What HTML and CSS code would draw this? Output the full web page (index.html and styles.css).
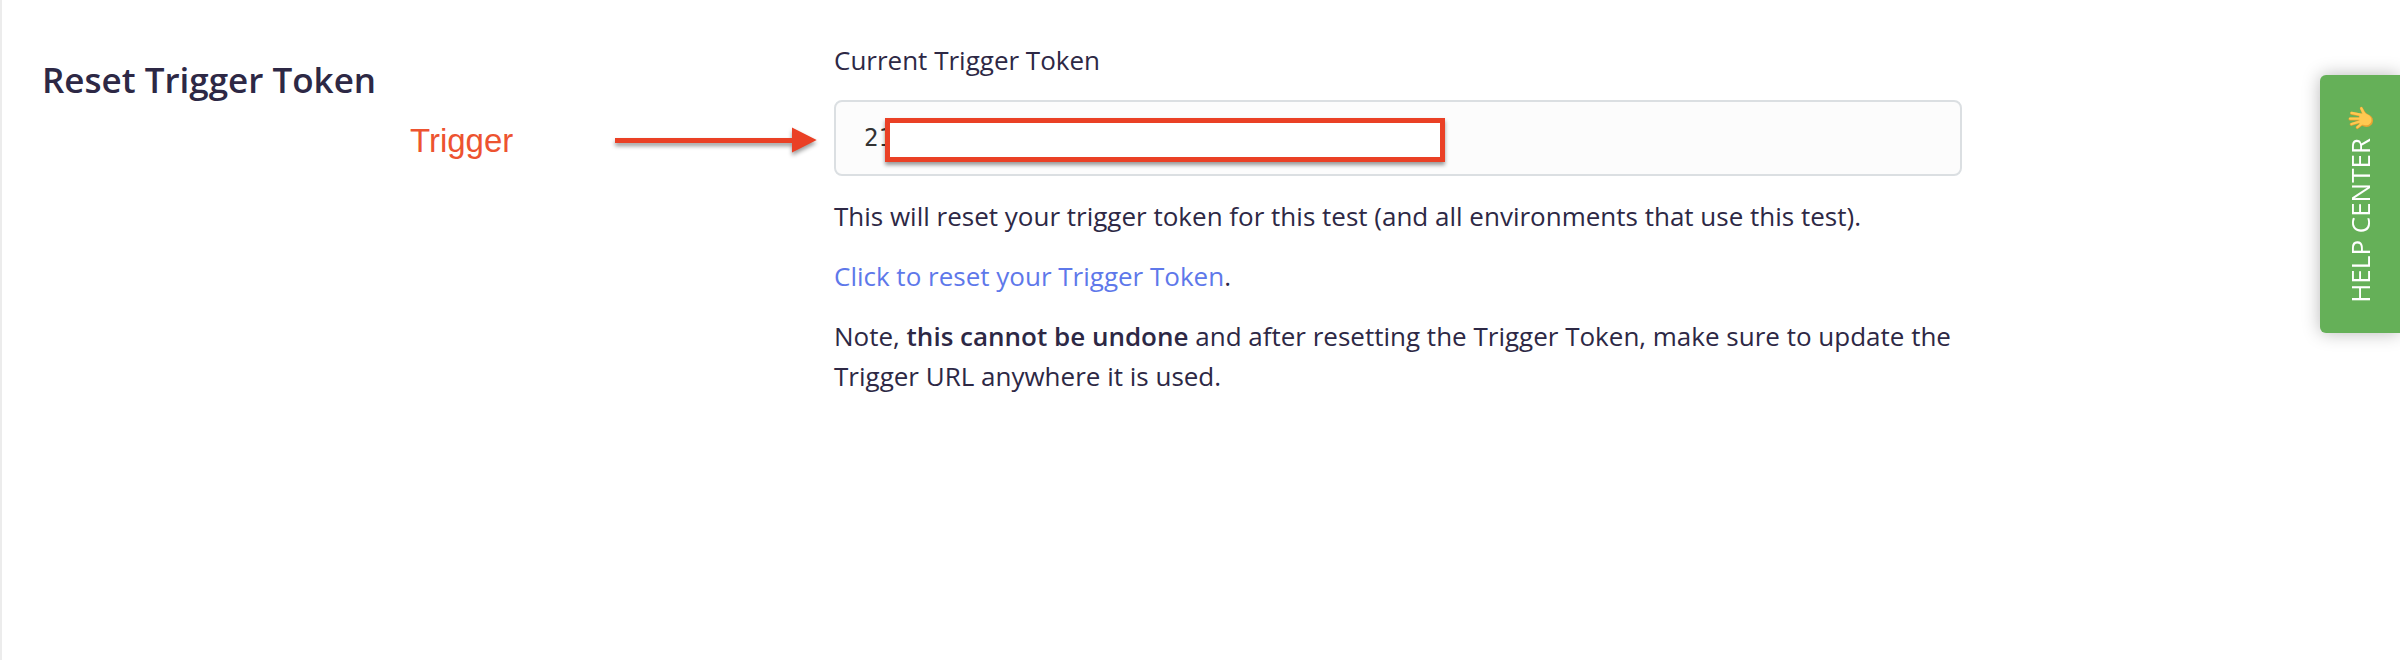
FILE: index.html
```html
<!DOCTYPE html>
<html lang="en">
<head>
<meta charset="utf-8">
<title>Reset Trigger Token</title>
<link rel="stylesheet" href="styles.css">
</head>
<body>
<main class="settings">
  <h2 class="title">Reset Trigger Token</h2>
  <section class="details">
    <label class="label" for="token">Current Trigger Token</label>
    <div class="field">
      <input class="token" id="token" type="text" value="21" readonly>
      <div class="redaction"></div>
    </div>
    <p>This will reset your trigger token for this test (and all environments that use this test).</p>
    <p><a class="link" href="#">Click to reset your Trigger Token</a>.</p>
    <p>Note, <strong>this cannot be undone</strong> and after resetting the Trigger Token, make sure to update the Trigger URL anywhere it is used.</p>
  </section>
</main>
<div class="callout">Trigger</div>
<svg class="arrow" width="220" height="50" viewBox="0 0 220 50">
  <path d="M5 18H182V7.500L206.700 20L182 32.500V23H5Z" fill="#ea4025"/>
</svg>
<button class="help" type="button">
  <span class="help-text">HELP CENTER</span>
  <svg class="hand" width="26" height="26" viewBox="0 0 26 26">
    <path d="M17 9L14.300 3.400M16 10.500L4.600 8.200M15 14L3 14M15 16L4.200 19.400M16 18L10.200 22.600" fill="none" stroke="#e79f2d" stroke-width="3" stroke-linecap="round"/>
    <path d="M14 2.200C17 3 17.500 7.500 20.500 9Q26 11 26 15.500C26 20 22 23 17 21.500L12 19V9.500L15 8.500Z" fill="#e9a332"/>
    <path d="M17 9L14.300 3.300M15 10L4.600 7.900M15 13.600L3 13.600M15 15.800L4.500 19M16 17.600L10.400 22.200" fill="none" stroke="#ffc951" stroke-width="2.300" stroke-linecap="round"/>
    <path d="M15 4C16.500 5 17.500 8.500 20.500 9.500Q24.500 11.500 24.500 15C24.500 19 21 21 17 20L12.500 18.500V9.500L16 8.500Z" fill="#ffc951"/>
  </svg>
</button>
</body>
</html>
```
FILE: styles.css
```css
* { box-sizing: border-box; }
body {
  margin: 0;
  height: 660px;
  overflow: hidden;
  position: relative;
  background: #fff;
  border-left: 2px solid #ececec;
  color: #2d2845;
  font: 26px/40px "Open Sans", sans-serif;
}
.settings {
  display: grid;
  grid-template-columns: 792px 1128px;
  padding: 40px 0 0 40px;
}
.title {
  margin: 16px 0 0;
  font-size: 35px;
  line-height: 48px;
  font-weight: 600;
}
.label { display: block; margin-bottom: 20px; }
.field { position: relative; margin-bottom: 20px; }
.token {
  display: block;
  width: 100%;
  height: 76px;
  padding: 0 28px;
  border: 2px solid #dbdfe2;
  border-radius: 8px;
  background: #fcfcfc;
  color: #333;
  font: 24px "DejaVu Sans Mono", monospace;
  outline: none;
}
.redaction {
  position: absolute;
  left: 51px;
  top: 18px;
  width: 560px;
  height: 44px;
  border: 5px solid #ea4025;
  background: #fff;
  box-shadow: 0 3px 4px rgba(0, 0, 0, .4);
}
p { margin: 0 0 20px; }
strong { font-weight: 600; }
.link { color: #5e78ea; text-decoration: none; }
.callout {
  position: absolute;
  left: 408px;
  top: 121px;
  color: #ed5330;
  font: 33px/40px "Liberation Sans", Arial, sans-serif;
}
.arrow {
  position: absolute;
  left: 608px;
  top: 120px;
  filter: drop-shadow(0 3px 2px rgba(0, 0, 0, .4));
}
.help {
  position: absolute;
  right: 0;
  top: 75px;
  width: 80px;
  height: 258px;
  display: flex;
  flex-direction: column-reverse;
  align-items: center;
  justify-content: flex-start;
  gap: 7px;
  padding: 0 0 30px;
  border: 0;
  border-radius: 6px 0 0 6px;
  background: #65b058;
  box-shadow: 0 0 18px rgba(0, 0, 0, .28);
  color: #fff;
  font: 26px/36px "Open Sans", sans-serif;
}
.help-text {
  writing-mode: vertical-rl;
  transform: rotate(180deg);
  white-space: nowrap;
}
.hand { flex: none; }
```
